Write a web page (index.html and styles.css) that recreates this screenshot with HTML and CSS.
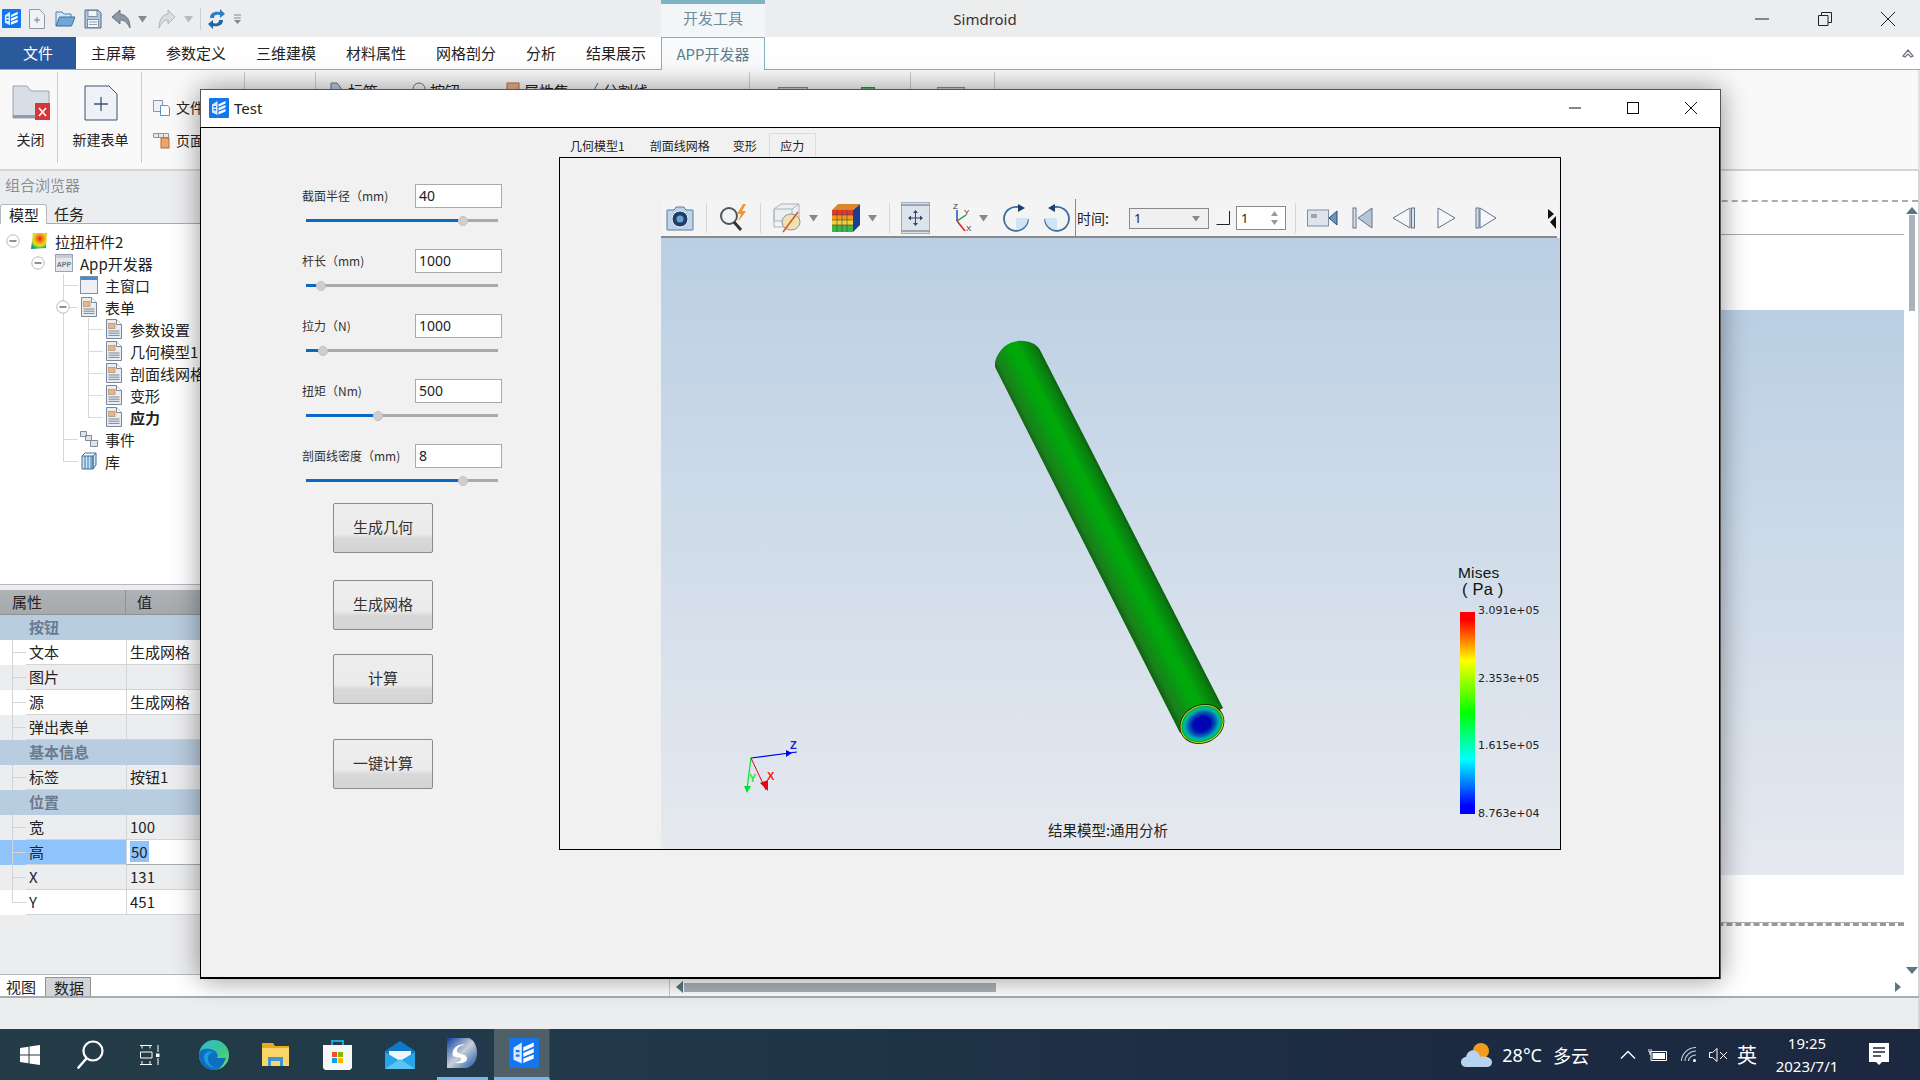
FILE: index.html
```html
<!DOCTYPE html>
<html lang="zh-CN">
<head>
<meta charset="utf-8">
<title>Simdroid</title>
<link rel="stylesheet" href="styles.css">
</head>
<body>
<svg class="sprites" width="0" height="0">
  <defs>
    <symbol id="logo" viewBox="0 0 20 20">
      <rect width="20" height="20" rx="1" fill="#1476ee"/>
      <path d="M3 6.5 8.5 3v14L3 14.5z" fill="#dcecff"/>
      <path d="M9.5 6.2 16.5 3v2.6L9.5 8.8zM9.5 10 16.5 7v2.6l-7 3zM9.5 13.8l7-2.8v2.6l-7 3z" fill="#fff"/>
      <path d="M4.5 8h2.5v1.5H4.5zM4.5 11h2.5v1.5H4.5z" fill="#1476ee"/>
    </symbol>
    <symbol id="doc" viewBox="0 0 18 20">
      <path d="M1.5.5h10l5 5v14h-15z" fill="#e9ecf1" stroke="#7b8796"/>
      <path d="M11.5.5v5h5" fill="#fff" stroke="#7b8796"/>
      <rect x="3.5" y="4.5" width="6.5" height="5" fill="#f3b27c" stroke="#9a8a7a" stroke-width=".6"/>
      <path d="M3.5 12h11M3.5 14.2h11M3.5 16.4h11" stroke="#7b8796"/>
    </symbol>
    <symbol id="minus" viewBox="0 0 14 14">
      <circle cx="7" cy="7" r="6.2" fill="#fff" stroke="#b5b8bd"/>
      <path d="M3.5 7h7" stroke="#555" stroke-width="1.3"/>
    </symbol>
    <symbol id="caret" viewBox="0 0 9 8"><path d="M0 1h9L4.5 7.5z" fill="#85898d"/></symbol>
  </defs>
</svg>

<div class="app">
  <header class="titlebar">
    <div class="qat">
      <svg class="q-logo" width="19" height="19"><use href="#logo"/></svg>
      <svg class="q-new" width="18" height="20" viewBox="0 0 18 20"><path d="M1.500.5h10l5 5v14h-15z" fill="#f1f3f6" stroke="#8d99ab"/><path d="M6 11h6M9 8v6" stroke="#6f7b8d"/></svg>
      <svg class="q-open" width="20" height="18" viewBox="0 0 20 18"><path d="M1 16V2h6l2 2h7v3" fill="#d5e6f5" stroke="#4f7ea8"/><path d="M1 16 4.500 7H20l-3.500 9z" fill="#6fa8d6" stroke="#3f6f9a"/></svg>
      <svg class="q-save" width="18" height="20" viewBox="0 0 18 20"><path d="M1 1h13l3 3v15H1z" fill="#b4c6dc" stroke="#54708f"/><rect x="4" y="1.500" width="9" height="6" fill="#eef3f8" stroke="#54708f" stroke-width=".7"/><rect x="3.500" y="10.500" width="11" height="8" fill="#f5f7fa" stroke="#54708f" stroke-width=".7"/><path d="M5 13h8M5 15.500h8" stroke="#8fa2b6"/></svg>
      <svg class="q-undo" width="21" height="20" viewBox="0 0 21 20"><path d="M9 1 1 8l8 7v-4c4 0 7 2 10 8 0-8-3-13-10-14z" fill="#8f98a6" stroke="#59636f" stroke-width=".8"/></svg>
      <svg class="q-c1" width="9" height="8"><use href="#caret"/></svg>
      <svg class="q-redo" width="18" height="20" viewBox="0 0 18 20"><path d="M10 1l7 7-7 7v-4c-4 0-6 2-9 8 0-8 3-13 9-14z" fill="#d8dbe0" stroke="#a6abb3" stroke-width=".8"/></svg>
      <svg class="q-c2 faded" width="9" height="8"><use href="#caret"/></svg>
      <i class="q-sep"></i>
      <svg class="q-ref" width="17" height="20" viewBox="0 0 17 20"><path d="M2 9C2 4 6 2 12 3V0l5 5-5 4V6C8 5 6 6 6 9z" fill="#2a7fc5"/><path d="M15 11c0 5-4 7-10 6v3l-5-5 5-4v3c4 1 6 0 6-3z" fill="#2264a3"/></svg>
      <svg class="q-c3" width="7" height="10" viewBox="0 0 7 10"><path d="M0 1h7M0 4h7" stroke="#85898d"/><path d="M0 6h7L3.500 10z" fill="#85898d"/></svg>
    </div>
    <div class="ctx-tab">开发工具</div>
    <div class="app-name">Simdroid</div>
    <div class="winbtns">
      <svg width="14" height="14" viewBox="0 0 14 14"><path d="M0 7h14" stroke="#222"/></svg>
      <svg width="14" height="14" viewBox="0 0 14 14"><path d="M.5 3.500h9.500v10H.5zM3.500 3.500V.5h10v10H10" fill="none" stroke="#222"/></svg>
      <svg width="14" height="14" viewBox="0 0 14 14"><path d="M0 0l14 14M14 0 0 14" stroke="#222"/></svg>
    </div>
  </header>

  <nav class="tabs">
    <a class="tab-file">文件</a>
    <a class="t1">主屏幕</a><a class="t2">参数定义</a><a class="t2">三维建模</a><a class="t2">材料属性</a><a class="t2">网格剖分</a><a class="t3">分析</a><a class="t2">结果展示</a>
    <a class="tab-active">APP开发器</a>
    <svg class="collapse" width="12" height="10" viewBox="0 0 12 10"><path d="M1 8 6 2l5 6-2 1-3-3-3 3z" fill="#fff" stroke="#6b7480" stroke-width="1.200"/></svg>
  </nav>

  <section class="ribbon">
    <div class="rg rg-close">
      <svg width="38" height="36" viewBox="0 0 38 36"><path d="M1 33V1h14l4 5h18v27z" fill="#d8dde6" stroke="#9aa5b5"/><path d="M1 30h36v3H1z" fill="#8f9db1"/><rect x="23" y="18" width="15" height="17" fill="#d6363a"/><path d="M27 23l7 8M34 23l-7 8" stroke="#fff" stroke-width="1.600"/></svg>
      <span>关闭</span>
    </div>
    <div class="rg rg-new">
      <svg width="34" height="36" viewBox="0 0 34 36"><path d="M1 1h24l8 8v26H1z" fill="#eef1f6" stroke="#3e5373"/><path d="M10 19h14M17 12v14" stroke="#3e5373" stroke-width="1.300"/></svg>
      <span>新建表单</span>
    </div>
    <div class="rg rg-list">
      <div class="rl"><svg width="17" height="17" viewBox="0 0 17 17"><path d="M.5 1.500h9v11h-9z" fill="#eef1f6" stroke="#8a97a8"/><path d="M7.500 6.500h7l2 2v8h-9z" fill="#fff" stroke="#5e90c0"/></svg><span>文件</span></div>
      <div class="rl"><svg width="17" height="17" viewBox="0 0 17 17"><path d="M.5 1.500h15v4h-15z" fill="#e8e8e8" stroke="#8a97a8"/><path d="M5.500 1.500v4M10.500 1.500v4" stroke="#8a97a8"/><rect x="8" y="6" width="8" height="10" fill="#f0a468" stroke="#b07040"/></svg><span>页面</span></div>
    </div>
    <div class="rg rg-empty"></div>
    <div class="rg rg-ctl">
      <span class="rc c1"><svg width="14" height="16" viewBox="0 0 14 16"><path d="M1 1h6l6 8-6 6-6-8z" fill="#b9cde0" stroke="#63748b"/></svg>标签</span>
      <span class="rc c2"><svg width="14" height="16" viewBox="0 0 14 16"><circle cx="7" cy="7" r="6" fill="#f3f5f8" stroke="#63748b"/></svg>按钮</span>
      <span class="rc c3"><svg width="14" height="16" viewBox="0 0 14 16"><rect x="1" y="1" width="12" height="14" fill="#f0b08a" stroke="#b07040"/></svg>属性集</span>
      <span class="rc c4"><svg width="10" height="16" viewBox="0 0 10 16"><path d="M9 1 1 15" stroke="#5e90c0" stroke-width="1.200"/></svg>分割线</span>
    </div>
    <div class="rg rg-b"><i class="rb b1"></i><i class="rb b2"></i></div>
    <div class="rg rg-c"><i class="rb b3"></i></div>
    <div class="rg rg-fill"></div>
  </section>

  <main class="work">
    <aside class="side">
      <div class="side-title">组合浏览器</div>
      <div class="side-tabs"><span class="st on">模型</span><span class="st">任务</span></div>
      <div class="tree">
        <ul>
          <li>
            <div class="row"><svg class="tg" width="14" height="14"><use href="#minus"/></svg>
              <svg class="ti" width="18" height="18" viewBox="0 0 18 18"><defs><radialGradient id="hm" cx=".55" cy=".35" r=".8"><stop offset="0" stop-color="#e8201a"/><stop offset=".35" stop-color="#f7a51a"/><stop offset=".55" stop-color="#e8e020"/><stop offset=".75" stop-color="#30c040"/><stop offset="1" stop-color="#1e60d0"/></radialGradient></defs><path d="M3 1h14l-1 15-15 1z" fill="url(#hm)"/></svg>
              <span>拉扭杆件2</span></div>
            <ul>
              <li>
                <div class="row"><svg class="tg" width="14" height="14"><use href="#minus"/></svg>
                  <svg class="ti" width="18" height="18" viewBox="0 0 18 18"><rect x=".5" y=".5" width="17" height="17" fill="#e4e7ec" stroke="#9aa3af"/><path d="M1 1h16v3H1z" fill="#c9ced6"/><text x="9" y="13" class="appt">APP</text></svg>
                  <span>App开发器</span></div>
                <ul>
                  <li><div class="row"><svg class="ti" width="18" height="18" viewBox="0 0 18 18"><rect x=".5" y=".5" width="17" height="17" fill="#eef0f4" stroke="#7e8ea3"/><path d="M1 1h16v3H1z" fill="#3f8fd6"/></svg><span>主窗口</span></div></li>
                  <li>
                    <div class="row"><svg class="tg" width="14" height="14"><use href="#minus"/></svg><svg class="ti" width="18" height="20"><use href="#doc"/></svg><span>表单</span></div>
                    <ul>
                      <li><div class="row"><svg class="ti" width="18" height="20"><use href="#doc"/></svg><span>参数设置</span></div></li>
                      <li><div class="row"><svg class="ti" width="18" height="20"><use href="#doc"/></svg><span>几何模型1</span></div></li>
                      <li><div class="row"><svg class="ti" width="18" height="20"><use href="#doc"/></svg><span>剖面线网格</span></div></li>
                      <li><div class="row"><svg class="ti" width="18" height="20"><use href="#doc"/></svg><span>变形</span></div></li>
                      <li><div class="row"><svg class="ti" width="18" height="20"><use href="#doc"/></svg><b>应力</b></div></li>
                    </ul>
                  </li>
                  <li><div class="row"><svg class="ti" width="18" height="18" viewBox="0 0 18 18"><path d="M.5 1.500h6v5h-6zM5.500 5.500h6v5h-6zM10.500 10.500h7v6h-7z" fill="#dfe3e9" stroke="#7e8a98"/></svg><span>事件</span></div></li>
                  <li><div class="row"><svg class="ti" width="18" height="18" viewBox="0 0 18 18"><path d="M2 4h11v13H2zM13 4l3-3v12l-3 4z" fill="#cfe6f7" stroke="#3a6f9c"/><path d="M5 4v13M8 4v13M11 4v13M2 4l3-3h11" fill="none" stroke="#3a6f9c"/></svg><span>库</span></div></li>
                </ul>
              </li>
            </ul>
          </li>
        </ul>
      </div>
      <div class="split"></div>
      <div class="props">
        <div class="ph"><span class="ph-n">属性</span><span class="ph-v">值</span></div>
        <div class="cat">按钮</div>
        <div class="pr w"><i class="pg"></i><span class="pn">文本</span><span class="pv">生成网格</span></div>
        <div class="pr"><i class="pg"></i><span class="pn">图片</span><span class="pv"></span></div>
        <div class="pr w"><i class="pg"></i><span class="pn">源</span><span class="pv">生成网格</span></div>
        <div class="pr"><i class="pg"></i><span class="pn">弹出表单</span><span class="pv"></span></div>
        <div class="cat">基本信息</div>
        <div class="pr"><i class="pg"></i><span class="pn">标签</span><span class="pv">按钮1</span></div>
        <div class="cat">位置</div>
        <div class="pr"><i class="pg"></i><span class="pn">宽</span><span class="pv">100</span></div>
        <div class="pr sel"><i class="pg"></i><span class="pn">高</span><span class="pv"><mark>50</mark></span></div>
        <div class="pr"><i class="pg"></i><span class="pn">X</span><span class="pv">131</span></div>
        <div class="pr w"><i class="pg pg-end"></i><span class="pn">Y</span><span class="pv">451</span></div>
      </div>
      <div class="side-bottom"><span class="sb">视图</span><span class="sb on">数据</span></div>
    </aside>
    <section class="canvas">
      <div class="doc">
        <div class="doc-body">
          <div class="doc-head"></div>
          <div class="doc-gap"></div>
          <div class="doc-blue"></div>
          <div class="doc-foot"></div>
        </div>
        <div class="vs"><svg width="12" height="7" viewBox="0 0 12 7"><path d="M0 7 6 0l6 7z" fill="#5a7582"/></svg><i class="vs-th"></i><svg class="vs-d" width="12" height="7" viewBox="0 0 12 7"><path d="M0 0h12L6 7z" fill="#5a7582"/></svg></div>
      </div>
      <div class="hs"><svg width="7" height="12" viewBox="0 0 7 12"><path d="M7 0v12L0 6z" fill="#5a7582"/></svg><i class="hs-th"></i><svg class="hs-r" width="6" height="10" viewBox="0 0 6 10"><path d="M0 0v10l6-5z" fill="#5a7582"/></svg></div>
    </section>
  </main>

  <div class="status"></div>

  <footer class="taskbar">
    <svg class="k-win" width="20" height="20" viewBox="0 0 20 20"><path d="M0 3l8.500-1.300v7.800H0zM9.500 1.500 20 0v9.500H9.500zM0 10.500h8.500v7.800L0 17zM9.500 10.500H20V20L9.500 18.500z" fill="#fff"/></svg>
    <svg class="k-search" width="27" height="29" viewBox="0 0 27 29"><circle cx="16" cy="11" r="9.500" fill="none" stroke="#fff" stroke-width="2.200"/><path d="M9 19 1.500 27.500" stroke="#fff" stroke-width="2.600" stroke-linecap="round"/></svg>
    <svg class="k-view" width="20" height="20" viewBox="0 0 20 20"><path d="M0 .5h12M0 19.500h12M.5 7h11.500v6H.5z" fill="none" stroke="#fff"/><path d="M2 .5v3M10 .5v3M2 16v3M10 16v3M18 0v7M18 13v7" stroke="#fff"/><rect x="16" y="8.500" width="3.500" height="3.500" fill="#fff"/></svg>
    <svg class="k-edge" width="30" height="30" viewBox="0 0 30 30"><defs><linearGradient id="eg" x1="0" y1="0" x2="1" y2="1"><stop offset="0" stop-color="#2fb8d8"/><stop offset=".6" stop-color="#3dc88a"/><stop offset="1" stop-color="#7ce060"/></linearGradient></defs><circle cx="15" cy="15" r="15" fill="url(#eg)"/><path d="M15 30C7 30 0 24 0 15 0 9 6 8 11 9c6 1 9 5 7 9h9c-3 8-7 12-12 12z" fill="#0c6fc0"/><path d="M15 12c-4 0-6 3-6 7s3 8 9 9c-6 0-13-3-13-11 0-4 5-7 10-5z" fill="#1e9ae0"/></svg>
    <svg class="k-files" width="27" height="27" viewBox="0 0 27 27"><path d="M0 2h11l2 3h14v20H0z" fill="#e8a820"/><path d="M0 7h27v18H0z" fill="#fbd566"/><path d="M6 25V16h15v9h-3v-5h-9v5z" fill="#3f95d8"/></svg>
    <svg class="k-store" width="29" height="30" viewBox="0 0 29 30"><path d="M9 6V1h11v5" fill="none" stroke="#1fa3d8" stroke-width="2"/><path d="M0 5h29v23l-2 2H2l-2-2z" fill="#f4f6f7"/><path d="M9 12h5v5H9z" fill="#f25022"/><path d="M15 12h5v5h-5z" fill="#7fba00"/><path d="M9 18h5v5H9z" fill="#00a4ef"/><path d="M15 18h5v5h-5z" fill="#ffb900"/></svg>
    <svg class="k-mail" width="30" height="28" viewBox="0 0 30 28"><path d="M0 10 15 0l15 10v18H0z" fill="#0f78c8"/><path d="M4 10h22v7l-11 6-11-6z" fill="#f0f6fb"/><path d="M0 11l15 9 15-9v17H0z" fill="#26a5e8"/><path d="M0 28 15 18l15 10z" fill="#5cc4f2"/></svg>
    <div class="k-simd"><svg width="30" height="30" viewBox="0 0 30 30"><defs><linearGradient id="sg" x1="0" y1="0" x2="1" y2="1"><stop offset="0" stop-color="#0d3fa0"/><stop offset=".5" stop-color="#c8d0da"/><stop offset="1" stop-color="#1a4fa8"/></linearGradient></defs><path d="M2 0h20c5 2 8 8 8 15 0 8-4 13-10 15H0V0z" fill="url(#sg)"/><path d="M6 18c-2-7 5-13 12-11-5 0-8 3-8 6 0 4 9 2 10 7 1 4-7 7-12 4 4 0 6-1 6-3 0-3-7-1-8-3z" fill="#fff"/></svg></div>
    <div class="k-act"><svg width="30" height="30"><use href="#logo"/></svg></div>
    <div class="tray">
      <svg class="y-cloud" width="31" height="26" viewBox="0 0 31 26"><circle cx="20" cy="9" r="8" fill="#f29a1d"/><path d="M6 25c-4 0-6-2-6-5 0-3 3-5 5-5 1-5 6-8 10-6 2 1 4 4 4 6 1-1 3-1 5 0 4 0 7 2 7 5 0 3-2 5-6 5z" fill="#b7d3f2"/></svg>
      <span class="y-temp">28°C</span><span class="y-wx">多云</span>
      <svg class="y-up" width="16" height="9" viewBox="0 0 16 9"><path d="M1 8.500 8 1.500l7 7" fill="none" stroke="#fff" stroke-width="1.300"/></svg>
      <svg class="y-bat" width="20" height="12" viewBox="0 0 20 12"><path d="M3 2.500h15.500v9H3z" fill="none" stroke="#fff"/><rect x="4.500" y="4" width="12.500" height="6" fill="#fff"/><path d="M1 0v3h2V0M2 3v3" stroke="#fff"/></svg>
      <svg class="y-wifi" width="16" height="15" viewBox="0 0 16 15"><path d="M.5 14C.5 7 7 .5 15 .5M4 14c0-5 5-10 11-10M7.500 14c0-3 3-6 7.500-6" fill="none" stroke="#c6ccd6" stroke-width="1.100"/><circle cx="13.500" cy="13.500" r="1.500" fill="#fff"/></svg>
      <svg class="y-vol" width="19" height="14" viewBox="0 0 19 14"><path d="M.5 4.500h3L8 .5v13l-4.500-4h-3z" fill="none" stroke="#fff"/><path d="M11 4l7 7M18 4l-7 7" stroke="#fff"/></svg>
      <span class="y-ime">英</span>
      <div class="y-clock"><span>19:25</span><span>2023/7/1</span></div>
      <svg class="y-note" width="20" height="23" viewBox="0 0 20 23"><path d="M0 0h20v19h-7l-3 3-3-3H0z" fill="#fff"/><path d="M4 5h12M4 9h12M4 13h8" stroke="#1b2840" stroke-width="1.300"/></svg>
    </div>
  </footer>
</div>

<!-- Floating dialog -->
<div class="dialog">
  <div class="dlg-title">
    <svg width="20" height="20"><use href="#logo"/></svg>
    <span class="dlg-name">Test</span>
    <div class="dlg-btns">
      <svg width="12" height="12" viewBox="0 0 12 12"><path d="M0 6h12" stroke="#111"/></svg>
      <svg width="12" height="12" viewBox="0 0 12 12"><rect x=".5" y=".5" width="11" height="11" fill="none" stroke="#111"/></svg>
      <svg width="12" height="12" viewBox="0 0 12 12"><path d="M0 0l12 12M12 0 0 12" stroke="#111"/></svg>
    </div>
  </div>
  <div class="dlg-body">
    <div class="form">
      <div class="param"><label>截面半径（mm)</label><span class="inp">40</span><div class="slider"><i class="fill f1"></i><i class="knob"></i></div></div>
      <div class="param"><label>杆长（mm)</label><span class="inp">1000</span><div class="slider"><i class="fill f2"></i><i class="knob"></i></div></div>
      <div class="param"><label>拉力（N)</label><span class="inp">1000</span><div class="slider"><i class="fill f3"></i><i class="knob"></i></div></div>
      <div class="param"><label>扭矩（Nm)</label><span class="inp">500</span><div class="slider"><i class="fill f4"></i><i class="knob"></i></div></div>
      <div class="param"><label>剖面线密度（mm)</label><span class="inp">8</span><div class="slider"><i class="fill f1"></i><i class="knob"></i></div></div>
      <button class="btn b-1">生成几何</button>
      <button class="btn b-2">生成网格</button>
      <button class="btn b-3">计算</button>
      <button class="btn b-4">一键计算</button>
    </div>
    <div class="stack">
      <div class="stk-tabs"><span class="sk k1">几何模型1</span><span class="sk k2">剖面线网格</span><span class="sk k3">变形</span><span class="sk on">应力</span></div>
      <div class="pane">
        <div class="vtool">
          <svg class="ml5" width="28" height="26" viewBox="0 0 28 26"><path d="M1 5h7l2-3h8l2 3h7v20H1z" fill="#bfd3e8" stroke="#5b7f9e"/><circle cx="14" cy="14" r="8" fill="#1e3f6a" stroke="#e8eef4"/><circle cx="14" cy="14" r="3.500" fill="#6fa0cc"/></svg>
          <i class="tsep ml12"></i>
          <svg class="ml11" width="32" height="28" viewBox="0 0 32 28"><circle cx="11" cy="12" r="8" fill="#eef2f6" stroke="#555" stroke-width="2"/><path d="M16 18l7 8" stroke="#333" stroke-width="3"/><path d="M25 0l-6 10h4l-3 8 8-11h-4l4-7z" fill="#f0962a"/></svg>
          <i class="tsep ml10"></i>
          <svg class="ml12" width="32" height="32" viewBox="0 0 32 32"><path d="M1 7l7-5h18v17H1z" fill="#eceff2" stroke="#aab2ba"/><path d="M1 7h18v18H1zM19 7l7-5" fill="none" stroke="#aab2ba"/><ellipse cx="18" cy="20" rx="9" ry="8" fill="#f0e2b0" stroke="#8a94a0"/><path d="M10 30 25 10" stroke="#d9542a" stroke-width="1.500"/></svg>
          <svg class="ml4" width="9" height="8"><use href="#caret"/></svg>
          <svg class="ml13" width="29" height="28" viewBox="0 0 29 28"><path d="M1 6h21v22H1z" fill="#f7d030"/><path d="M1 6h21v5H1z" fill="#e23a2a"/><path d="M1 11h21v5H1z" fill="#f09a20"/><path d="M1 21h21v7H1z" fill="#3ab84a"/><path d="M22 6l7-6v21l-7 7z" fill="#1a3f90"/><path d="M1 6 7 0h22l-7 6z" fill="#d8882a"/><path d="M6 6v22M11 6v22M16 6v22M1 11h21M1 16h21M1 21h21" stroke="#444" stroke-width=".6"/></svg>
          <svg class="ml8" width="9" height="8"><use href="#caret"/></svg>
          <i class="tsep ml12"></i>
          <svg class="ml11" width="29" height="32" viewBox="0 0 29 32"><rect x=".5" y=".5" width="28" height="31" fill="#dde3ea" stroke="#a2adba"/><path d="M.5 3h28M.5 29h28" stroke="#5b6b80"/><path d="M14.500 11v10M10 16h9" stroke="#28466e"/><path d="M14.500 8l-2.500 3h5zM14.500 24l-2.500-3h5zM7 16l3-2.500v5zM22 16l-3-2.500v5z" fill="#28466e"/></svg>
          <svg class="ml16" width="26" height="30" viewBox="0 0 26 30"><path d="M11 18V7" stroke="#2050b0" stroke-width="1.500"/><path d="M11 18l9-6" stroke="#1a9a40" stroke-width="1.500"/><path d="M11 18l8 10" stroke="#e02020" stroke-width="1.500"/><text x="7" y="6" class="ax">Z</text><text x="18" y="12" class="ax">Y</text><text x="20" y="28" class="ax">X</text></svg>
          <svg class="ml7" width="9" height="8"><use href="#caret"/></svg>
          <svg class="ml15" width="26" height="28" viewBox="0 0 26 28"><path d="M15 3A12 12 0 1 0 25 15" fill="none" stroke="#3c6d9c" stroke-width="1.800"/><path d="M13 14h12a12 12 0 0 1-12 12z" fill="#cfe4f5"/><path d="M15 0l7 4-7 4z" fill="#1e3f6a"/></svg>
          <svg class="ml15" width="26" height="28" viewBox="0 0 26 28"><path d="M11 3A12 12 0 1 1 1 15" fill="none" stroke="#3c6d9c" stroke-width="1.800"/><path d="M13 14H1a12 12 0 0 0 12 12z" fill="#cfe4f5"/><path d="M11 0 4 4l7 4z" fill="#1e3f6a"/></svg>
          <i class="tsep dark ml5"></i>
          <span class="t-label ml1">时间:</span>
          <div class="t-select ml15"><span>1</span><svg width="8" height="7"><use href="#caret"/></svg></div>
          <svg class="ml7" width="14" height="16" viewBox="0 0 14 16"><path d="M.5 14.500h13V1" fill="none" stroke="#222"/><path d="M1.500 1h11v13h-11z" fill="#f5f5f5"/></svg>
          <div class="t-spin ml6"><span>1</span><svg width="7" height="16" viewBox="0 0 7 16"><path d="M0 6 3.500 1 7 6zM0 10h7l-3.500 5z" fill="#999"/></svg></div>
          <i class="tsep ml9"></i>
          <svg class="ml11" width="31" height="22" viewBox="0 0 31 22"><rect x=".5" y="3" width="21" height="16" fill="#dde4ec" stroke="#7d8da2"/><rect x="4" y="7" width="6" height="4" fill="#9aa6b4"/><path d="M22 11l8-7v14z" fill="#6f94bb" stroke="#2d4a70"/></svg>
          <svg class="ml14" width="21" height="22" viewBox="0 0 21 22"><rect x="1" y="1" width="3" height="20" fill="#dbe2ea" stroke="#63748b"/><path d="M20 1v20L6 11z" fill="#b5c6d8" stroke="#63748b"/></svg>
          <svg class="ml18" width="25" height="22" viewBox="0 0 25 22"><path d="M19 1v20L2 11z" fill="#f3f5f8" stroke="#63748b"/><rect x="20.500" y="1" width="3" height="20" fill="#dbe2ea" stroke="#63748b"/></svg>
          <svg class="ml21" width="19" height="22" viewBox="0 0 19 22"><path d="M1 1v20l17-10z" fill="#f5f7fa" stroke="#63748b"/></svg>
          <svg class="ml19" width="22" height="22" viewBox="0 0 22 22"><rect x="1" y="1" width="3" height="20" fill="#dbe2ea" stroke="#63748b"/><path d="M5 1v20l16-10z" fill="#f5f7fa" stroke="#63748b"/></svg>
          <svg class="t-end" width="11" height="22" viewBox="0 0 11 22"><path d="M2 2l6 5-6 5zM10 22 4 15l6-6z" fill="#111"/></svg>
        </div>
        <div class="viewer">
          <svg class="scene" width="899" height="612" viewBox="661 238 899 612">
            <defs>
              <linearGradient id="body" gradientUnits="userSpaceOnUse" x1="995" y1="368" x2="1040" y2="345">
                <stop offset="0" stop-color="#116612"/><stop offset=".1" stop-color="#1a7f1c"/><stop offset=".45" stop-color="#00a80a"/><stop offset=".6" stop-color="#00a80a"/><stop offset=".88" stop-color="#0a7a10"/><stop offset="1" stop-color="#0a4f0c"/>
              </linearGradient>
              <radialGradient id="cap"><stop offset="0" stop-color="#0000b0"/><stop offset=".45" stop-color="#0008b4"/><stop offset=".7" stop-color="#0060b0"/><stop offset=".88" stop-color="#00b0b0"/><stop offset="1" stop-color="#00c070"/></radialGradient>
            </defs>
            <path d="M995 367 1180 733 1223 708 1040 350C1033 337 1002 335 995 362z" fill="url(#body)"/>
            <g transform="rotate(-25 1202 724)">
              <ellipse cx="1202" cy="724" rx="23" ry="19.200" fill="#111"/>
              <ellipse cx="1202" cy="724" rx="22.300" ry="18.500" fill="#c8d000"/>
              <ellipse cx="1202" cy="724" rx="21.300" ry="17.500" fill="#00b040"/>
              <ellipse cx="1202" cy="724" rx="20" ry="16.300" fill="url(#cap)"/>
            </g>
            <g class="triad">
              <path d="M751 758 797 752" stroke="#0000f0" stroke-width="1.200"/>
              <path d="M786 750l6 3-6 4z" fill="#0000f0"/>
              <path d="M751 758 747 789" stroke="#00e030" stroke-width="1.200"/>
              <path d="M744 786h7l-4 7z" fill="#00e030"/>
              <path d="M751 758 766 790" stroke="#e00020" stroke-width="1"/>
              <path d="M760 783l8-3v11z" fill="#f00010"/>
              <text x="790" y="749" class="tz">Z</text>
              <text x="749" y="782" class="ty">Y</text>
              <text x="767" y="780" class="tx">X</text>
            </g>
          </svg>
          <div class="legend">
            <div class="lg-t">Mises<br><span class="lg-u">( Pa )</span></div>
            <div class="lg-b">
              <i class="lg-bar"></i>
              <div class="lg-v"><span>3.091e+05</span><span>2.353e+05</span><span>1.615e+05</span><span>8.763e+04</span></div>
            </div>
          </div>
          <div class="caption">结果模型:通用分析</div>
        </div>
      </div>
    </div>
  </div>
</div>
</body>
</html>
```

FILE: styles.css
```css
* { box-sizing: border-box; }
html, body { margin: 0; padding: 0; }
body {
  width: 1920px; height: 1080px; overflow: hidden; position: relative;
  font-family: "Noto Sans CJK SC", "Noto Sans", sans-serif; color: #222; background: #ecedef;
}
.sprites { position: absolute; }
svg { display: block; flex: none; }
i { display: block; }

.app { width: 1920px; height: 1080px; display: flex; flex-direction: column; }

/* title bar */
.titlebar { height: 37px; flex: none; background: #ecedef; display: flex; align-items: center; position: relative; }
.qat { display: flex; align-items: center; width: 661px; padding-left: 2px; }
.q-new { margin-left: 7px; } .q-open { margin-left: 9px; } .q-save { margin-left: 9px; }
.q-undo { margin-left: 9px; } .q-c1 { margin-left: 6px; } .q-redo { margin-left: 11px; }
.q-c2 { margin-left: 8px; } .faded { opacity: .5; }
.q-sep { width: 1px; height: 22px; background: #c9ccd0; margin-left: 7px; }
.q-ref { margin-left: 7px; } .q-c3 { margin-left: 9px; }
.ctx-tab {
  width: 104px; height: 37px; background: #f3f6f8; border-top: 4px solid #7fb3c1;
  color: #6b8c98; font-size: 15px; display: flex; align-items: center; justify-content: center; padding-bottom: 6px;
}
.app-name { width: 440px; text-align: center; font-size: 15px; font-family: "Noto Sans", sans-serif; color: #333; }
.winbtns { margin-left: auto; display: flex; gap: 49px; padding-right: 25px; }

/* ribbon tabs */
.tabs { height: 33px; flex: none; background: #fff; display: flex; align-items: stretch; font-size: 15px; border-bottom: 1px solid #7fb3c1; position: relative; }
.tabs a { display: flex; align-items: center; justify-content: center; color: #222; padding-bottom: 2px; }
.tab-file { width: 76px; background: #2a5a9c; color: #fff !important; }
.t1 { width: 75px; } .t2 { width: 90px; } .t3 { width: 60px; }
.tab-active { width: 104px; height: 33px; background: #f8fafb; border: 1px solid #7fb3c1; border-bottom: 0; color: #5a7f8f !important; }
.collapse { margin: auto 6px auto auto; }

/* ribbon */
.ribbon { height: 101px; flex: none; background: #f9f9f9; display: flex; border-bottom: 2px solid #d4d4d4; border-right: 2px solid #e2e2e2; padding-bottom: 6px; padding-top: 2px; font-size: 14px; }
.rg { border-right: 1px solid #c9ccd0; flex: none; }
.rg-close { width: 58px; display: flex; flex-direction: column; align-items: center; padding: 13px 0 0 4px; gap: 8px; }
.rg-new { width: 84px; display: flex; flex-direction: column; align-items: center; padding: 13px 0 0 2px; gap: 8px; }
.rg-list { width: 103px; padding: 25px 0 0 11px; display: flex; flex-direction: column; gap: 13px; }
.rl { display: flex; align-items: center; gap: 6px; height: 20px; }
.rg-empty { width: 71px; }
.rg-ctl { width: 434px; display: flex; padding-top: 8px; font-size: 15px; }
.rc { display: flex; align-items: center; gap: 4px; height: 20px; white-space: nowrap; }
.c1 { margin-left: 14px; } .c2 { margin-left: 34px; } .c3 { margin-left: 46px; } .c4 { margin-left: 20px; }
.rg-b { width: 161px; display: flex; padding-top: 15px; }
.rg-c { width: 84px; padding-top: 15px; }
.rg-fill { flex: 1; border: 0; }
.rb { background: #cfd5dd; border: 1px solid #7e8ea3; height: 20px; }
.b1 { width: 30px; margin-left: 28px; } .b2 { width: 14px; margin-left: 53px; background: #5cb85c; border-color: #3a8a3a; }
.b3 { width: 28px; margin-left: 26px; }

/* workspace */
.work { flex: 1; min-height: 0; display: flex; }
.side { width: 670px; flex: none; background: #ecedef; display: flex; flex-direction: column; border-right: 1px solid #c9ccd0; }
.side-title { height: 33px; flex: none; padding: 4px 0 0 5px; font-size: 15px; color: #8a8f96; line-height: 20px; }
.side-tabs { height: 20px; flex: none; display: flex; border-bottom: 1px solid #a9adb0; font-size: 15px; line-height: 19px; }
.st { width: 46px; padding-left: 0; height: 20px; }
.st.on { background: #fff; border: 1px solid #b5b8bd; border-bottom: 0; border-radius: 3px 3px 0 0; width: 47px; margin-right: 7px; padding-left: 8px; }
.tree { height: 360px; flex: none; background: #fff; font-size: 15px; padding-top: 6px; }
.tree ul { list-style: none; margin: 0; padding: 0 0 0 25px; }
.tree > ul { padding-left: 13px; }
.tree li { position: relative; }
.tree ul ul ul > li::before { content: ""; position: absolute; left: 0; top: 0; bottom: 0; border-left: 1px solid #d6d8db; }
.tree ul ul ul > li:last-child::before { bottom: auto; height: 12px; }
.tree ul ul ul > li > .row::before { content: ""; position: absolute; left: 0; top: 11px; width: 15px; border-top: 1px solid #d6d8db; }
.row { position: relative; height: 22px; display: flex; align-items: center; padding-left: 17px; white-space: nowrap; }
.tg { position: absolute; left: -7px; top: 4px; z-index: 1; }
.ti { margin-right: 7px; }
.appt { font: bold 7px "Liberation Sans", sans-serif; fill: #6a7787; text-anchor: middle; }
.row b { font-weight: 700; }
.split { height: 6px; flex: none; background: #ecedef; border-top: 1px solid #b5b8bd; }
.props { height: 385px; flex: none; font-size: 15px; line-height: 24px; background: #ecedef; border-bottom: 1px solid #b5b8bd; }
.ph { height: 25px; display: flex; background: linear-gradient(#aeb2b5, #a6aaad); border-bottom: 1px solid #8f9396; }
.ph-n { width: 126px; padding-left: 12px; border-right: 1px solid #8f9396; }
.ph-v { padding-left: 11px; }
.cat { height: 25px; background: #b9cde0; color: #6c7a8c; font-weight: 700; padding-left: 29px; }
.pr { height: 25px; display: flex; }
.pg { width: 26px; flex: none; position: relative; }
.pg::before { content: ""; position: absolute; left: 12px; top: 0; bottom: 0; border-left: 1px solid #d2d4d7; }
.pg::after { content: ""; position: absolute; left: 12px; top: 12px; width: 14px; border-top: 1px solid #d2d4d7; }
.pg-end::before { bottom: 12px; }
.pn { width: 100px; flex: none; padding-left: 3px; border-bottom: 1px solid #d2d4d7; }
.pv { flex: 1; padding-left: 3px; border-left: 1px solid #d2d4d7; border-bottom: 1px solid #d2d4d7; }
.pr.w { background: #fff; }
.pr.sel .pg, .pr.sel .pn { background: #8fc3fb; }
.pr.sel .pv { background: #fff; border-bottom-color: #a9adb0; }
mark { background: #8fc3fb; color: #222; padding: 0 1px; }
.side-bottom { flex: 1; display: flex; font-size: 15px; padding-top: 2px; background: #fff; align-items: flex-start; }
.sb { width: 45px; padding-left: 6px; height: 20px; line-height: 20px; }
.sb.on { background: #d2d4d7; border: 1px solid #8f9396; border-bottom: 0; width: 46px; padding-left: 8px; }

.canvas { flex: 1; background: #fff; display: flex; flex-direction: column; padding-top: 29px; border-right: 2px solid #d2d4d7; }
.doc { flex: 1; min-height: 0; display: flex; border-top: 2px dashed #a9adb0; }
.doc-body { flex: 1; display: flex; flex-direction: column; }
.doc-head { height: 33px; flex: none; border-bottom: 1px solid #a9adb0; }
.doc-gap { height: 75px; flex: none; }
.doc-blue { height: 565px; flex: none; background: linear-gradient(#bacfe4, #e6e9ef); }
.doc-foot { height: 51px; flex: none; border-bottom: 3px dashed #999; box-shadow: inset 0 -5px 0 -4px #a9adb0; }
.vs { width: 14px; flex: none; padding: 5px 0 0 1px; display: flex; flex-direction: column; align-items: center; }
.vs-th { width: 6px; height: 96px; background: #abb2b9; margin-top: 1px; }
.vs-d { margin-top: auto; margin-bottom: 4px; }
.hs { height: 18px; flex: none; display: flex; align-items: center; padding-left: 6px; background: #fff; }
.hs-th { width: 312px; height: 9px; background: #abb2b9; margin-left: 1px; }
.hs-r { margin-left: auto; margin-right: 17px; }

.status { height: 33px; flex: none; background: #ecedef; border-top: 2px solid #a9adb0; border-right: 2px solid #d2d4d7; }

/* taskbar */
.taskbar { height: 51px; flex: none; display: flex; align-items: center; background: linear-gradient(90deg, #233c47 0%, #21394a 30%, #1c2a42 75%, #1b2840 100%); color: #fff; }
.k-win { margin-left: 20px; }
.k-search { margin-left: 37px; }
.k-view { margin-left: 36px; }
.k-edge { margin-left: 39px; }
.k-files { margin-left: 33px; }
.k-store { margin-left: 34px; }
.k-mail { margin-left: 33px; }
.k-simd { margin-left: 22px; width: 51px; height: 51px; display: flex; align-items: center; padding-left: 10px; border-bottom: 3px solid #7cb6e8; }
.k-act { margin-left: 6px; width: 56px; height: 51px; background: #4f6068; border-bottom: 3px solid #7cb6e8; display: flex; align-items: center; padding-left: 15px; border-right: 1px solid #3a4a52; }
.tray { margin-left: auto; display: flex; align-items: center; height: 51px; }
.y-temp { font-size: 18px; margin-left: 10px; font-family: "Noto Sans", sans-serif; }
.y-wx { font-size: 18px; margin-left: 11px; }
.y-up { margin-left: 31px; }
.y-bat { margin-left: 12px; }
.y-wifi { margin-left: 13px; }
.y-vol { margin-left: 12px; }
.y-ime { font-size: 20px; margin-left: 9px; }
.y-clock { width: 90px; margin-left: 5px; display: flex; flex-direction: column; align-items: center; font-size: 15px; line-height: 23px; font-family: "Noto Sans", sans-serif; }
.y-note { margin-left: 17px; margin-right: 31px; }

/* dialog */
.dialog {
  position: absolute; left: 200px; top: 89px; width: 1521px; height: 890px;
  display: flex; flex-direction: column; background: #fff;
  border: 1px solid #555; border-bottom: 0; box-shadow: 0 0 26px rgba(0,0,0,.42);
}
.dlg-title { height: 37px; flex: none; display: flex; align-items: center; padding: 0 0 1px 8px; background: #fff; }
.dlg-name { font: 15px "Noto Sans", sans-serif; margin-left: 5px; color: #222; }
.dlg-btns { margin-left: auto; display: flex; gap: 46px; padding-right: 23px; }
.dlg-body { flex: 1; min-height: 0; display: flex; background: #f1f1f1; border-top: 1px solid #000; border-left: 1px solid #000; border-bottom: 2px solid #000; margin: 0 0 0 -1px; border-right: 1px solid #000; }
.form { width: 358px; flex: none; padding: 56px 0 0 101px; display: flex; flex-direction: column; align-items: flex-start; }
.param { display: grid; grid-template-columns: 113px 87px; grid-template-rows: 24px 41px; height: 65px; }
.param label { font-size: 12px; line-height: 24px; white-space: nowrap; color: #333; }
.inp { background: #fff; border: 1px solid #aaa; font: 14px/22px "Noto Sans", sans-serif; padding-left: 3px; color: #222; }
.slider { grid-column: 1 / 3; margin: 11px 4px 0 4px; width: 192px; height: 3px; background: #aaa; display: flex; align-items: center; }
.fill { height: 3px; background: #0a6abf; }
.f1 { width: 152px; } .f2 { width: 10px; } .f3 { width: 12px; } .f4 { width: 67px; }
.knob { width: 10px; height: 10px; border-radius: 50%; background: #cfcfcf; border: 1px solid #c0c0c0; flex: none; }
.btn { width: 100px; height: 50px; font: 15px "Noto Sans CJK SC", sans-serif; color: #333; border: 1px solid #8a8a8a; border-radius: 2px; background: linear-gradient(#eeeeee 0, #ebebeb 62%, #d8d8d8 72%, #d4d4d4 100%); margin-left: 31px; padding: 0 0 3px; flex: none; }
.b-1 { margin-top: -6px; } .b-2 { margin-top: 27px; } .b-3 { margin-top: 24px; } .b-4 { margin-top: 35px; }

.stack { width: 1001px; flex: none; padding-top: 5px; display: flex; flex-direction: column; }
.stk-tabs { height: 24px; flex: none; display: flex; font-size: 12px; align-items: center; }
.sk { white-space: nowrap; }
.k1 { margin-left: 11px; } .k2 { margin-left: 25px; } .k3 { margin-left: 23px; }
.sk.on { margin-left: 12px; width: 47px; height: 24px; line-height: 24px; text-align: center; background: #f1f1f1; border: 1px solid #dcdcdc; border-bottom: 0; }
.pane { height: 693px; flex: none; width: 1002px; border: 1px solid #000; padding: 42px 0 0 101px; display: flex; flex-direction: column; }
.vtool { height: 38px; flex: none; width: 896px; display: flex; align-items: center; background: #f4f4f4; border-bottom: 2px solid #8a8a8a; }
.ml1 { margin-left: 1px; } .ml4 { margin-left: 4px; } .ml5 { margin-left: 5px; } .ml6 { margin-left: 6px; }
.ml7 { margin-left: 7px; } .ml8 { margin-left: 8px; } .ml9 { margin-left: 9px; } .ml10 { margin-left: 10px; }
.ml11 { margin-left: 11px; } .ml12 { margin-left: 12px; } .ml13 { margin-left: 13px; } .ml14 { margin-left: 14px; }
.ml15 { margin-left: 15px; } .ml16 { margin-left: 16px; } .ml18 { margin-left: 18px; } .ml19 { margin-left: 19px; } .ml21 { margin-left: 21px; }
.tsep { width: 1px; height: 30px; background: #d6d6d6; flex: none; }
.tsep.dark { height: 38px; background: #8a8a8a; }
.ax { font: 8px "Liberation Sans", sans-serif; fill: #333; }
.t-label { width: 37px; font-size: 14px; white-space: nowrap; }
.t-select { width: 80px; height: 21px; border: 1px solid #8a8a8a; display: flex; align-items: center; justify-content: space-between; padding: 0 8px 0 4px; font: 13px "Noto Sans", sans-serif; background: #f0f0f0; }
.t-spin { width: 50px; height: 24px; border: 1px solid #8a8a8a; background: #fff; display: flex; align-items: center; justify-content: space-between; padding: 0 7px 0 4px; font: 13px "Noto Sans", sans-serif; }
.t-end { margin-left: auto; }
.viewer { flex: 1; min-height: 0; position: relative; background: linear-gradient(#bacfe4, #e6e9ef); overflow: hidden; }
.scene { position: absolute; left: 0; top: 0; }
.tz, .ty, .tx { font: bold 11px "Liberation Sans", sans-serif; }
.tz { fill: #1020e0; } .ty { fill: #30e040; } .tx { fill: #f02020; }
.legend { position: absolute; left: 797px; top: 326px; color: #111; }
.lg-t { font: 15.500px/17px "Liberation Sans", sans-serif; margin-bottom: 7px; width: 62px; letter-spacing: .2px; }
.lg-u { margin-left: 4px; font-size: 16.500px; }
.lg-b { display: flex; margin-left: 2px; }
.lg-bar { width: 15px; height: 202px; margin-top: 7px; background: linear-gradient(#ff0000 0, #ff0000 4%, #ffff00 24%, #00ff00 50%, #00ffff 73%, #0000ff 96%, #0000ff 100%); }
.lg-v { margin-left: 3px; height: 215px; display: flex; flex-direction: column; justify-content: space-between; font: 11px/12px "DejaVu Sans", sans-serif; color: #222; }
.caption { position: absolute; left: 387px; bottom: 9px; width: 124px; font-size: 14.500px; line-height: 20px; color: #222; white-space: nowrap; }
```
